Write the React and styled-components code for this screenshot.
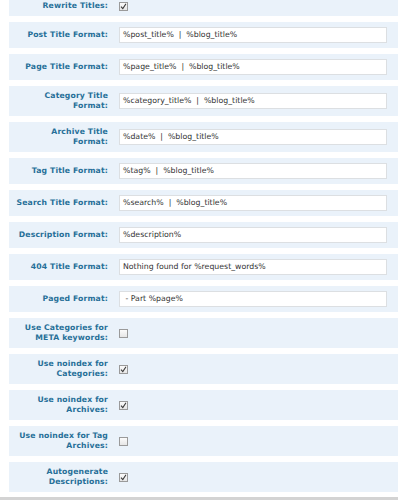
import React from 'react'
import styled, { createGlobalStyle } from 'styled-components'

const GlobalStyle = createGlobalStyle`
  html, body {
    margin: 0;
    padding: 0;
    background: #fff;
    overflow: hidden;
  }
`

const options = [
  { label: ['Rewrite Titles:'], check: true },
  { label: ['Post Title Format:'], value: '%post_title%  |  %blog_title%' },
  { label: ['Page Title Format:'], value: '%page_title%  |  %blog_title%' },
  { label: ['Category Title', 'Format:'], value: '%category_title%  |  %blog_title%' },
  { label: ['Archive Title', 'Format:'], value: '%date%  |  %blog_title%' },
  { label: ['Tag Title Format:'], value: '%tag%  |  %blog_title%' },
  { label: ['Search Title Format:'], value: '%search%  |  %blog_title%' },
  { label: ['Description Format:'], value: '%description%' },
  { label: ['404 Title Format:'], value: 'Nothing found for %request_words%' },
  { label: ['Paged Format:'], value: ' - Part %page%' },
  { label: ['Use Categories for', 'META keywords:'], check: false },
  { label: ['Use noindex for', 'Categories:'], check: true },
  { label: ['Use noindex for', 'Archives:'], check: true },
  { label: ['Use noindex for Tag', 'Archives:'], check: false },
  { label: ['Autogenerate', 'Descriptions:'], check: true },
]

const Page = styled.div`
  width: 398px;
  height: 500px;
  overflow: hidden;
  display: flex;
  flex-direction: column;
`

const Table = styled.div`
  margin-top: -4px;
  padding-left: 9px;
  display: flex;
  flex-direction: column;
  gap: 6px;
`

const Row = styled.div`
  display: grid;
  grid-template-columns: 104px 1fr;
  align-items: center;
  padding: 5px 11px 5px 0;
  background: #eaf2fa;
`

const Label = styled.div`
  text-align: right;
  padding-right: 5px;
  font-family: "DejaVu Sans", Verdana, sans-serif;
  font-weight: bold;
  font-size: 7.7px;
  letter-spacing: 0.15px;
  line-height: 10px;
  color: #266f98;
  white-space: nowrap;
`

const Control = styled.div`
  padding-left: 6px;
  display: flex;
  align-items: center;
`

const TextBox = styled.div`
  box-sizing: border-box;
  width: 100%;
  height: 16px;
  padding: 0 3px;
  background: #fff;
  border: 1px solid #dcdfe2;
  font-family: "DejaVu Sans", Verdana, sans-serif;
  font-size: 7.8px;
  line-height: 14px;
  color: #333;
  white-space: pre;
`

const Box = styled.span`
  box-sizing: border-box;
  display: inline-flex;
  align-items: center;
  justify-content: center;
  width: 9px;
  height: 9px;
  border: 1px solid #9a9a9a;
  background: linear-gradient(#fbfbfb, #e6e6e6);
`

const Footer = styled.div`
  margin-top: auto;
  height: 3px;
  background: #d3d3d3;
`

const CheckBox = ({ checked }) => (
  <Box>
    {checked && (
      <svg width="7" height="7" viewBox="0 0 7 7">
        <polyline points="1,3.6 2.8,5.6 6,0.8" fill="none" stroke="#3a3a3a" strokeWidth="1.1" />
      </svg>
    )}
  </Box>
)

export default function App() {
  return (
    <Page>
      <GlobalStyle />
      <Table>
        {options.map((o, i) => (
          <Row key={i}>
            <Label>
              {o.label.map((line, j) => (
                <div key={j}>{line}</div>
              ))}
            </Label>
            <Control>
              {o.value !== undefined ? <TextBox>{o.value}</TextBox> : <CheckBox checked={o.check} />}
            </Control>
          </Row>
        ))}
      </Table>
      <Footer />
    </Page>
  )
}
